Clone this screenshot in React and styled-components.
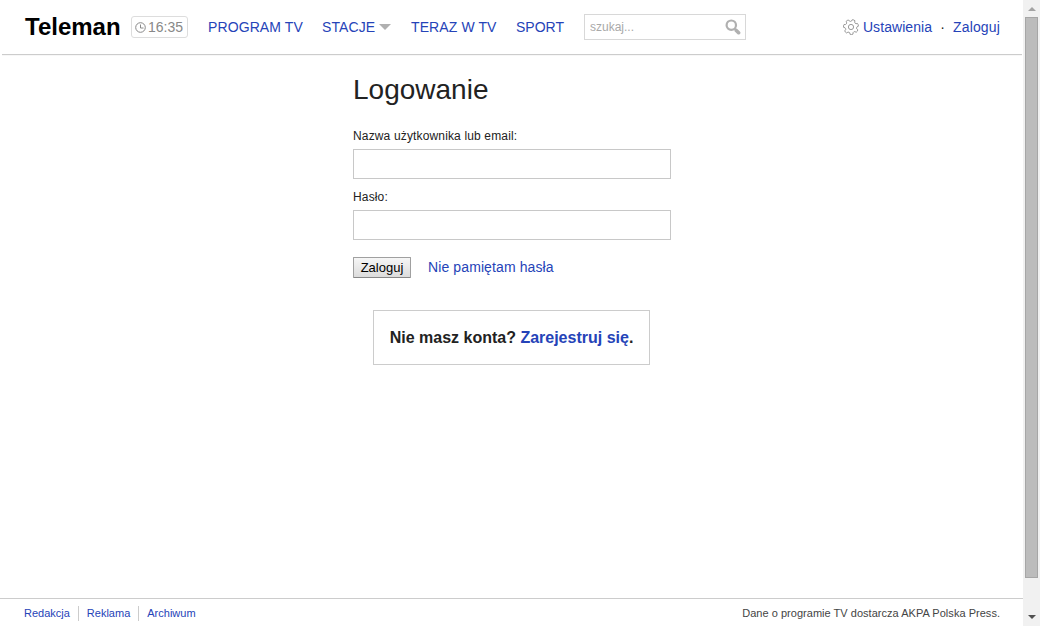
import React from "react";
import styled, { createGlobalStyle } from "styled-components";

const Global = createGlobalStyle`
  * { box-sizing: border-box; }
  html, body { margin: 0; padding: 0; overflow: hidden; }
  body {
    background: #fff;
    color: #222;
    font: 14px/18px "Liberation Sans", Arial, sans-serif;
  }
`;

const Window = styled.div`
  display: flex;
  width: 1040px;
  height: 626px;
`;
const Page = styled.div`
  display: flex;
  flex-direction: column;
  width: 1023px;
`;
const Link = styled.a`
  color: #2543b8;
  text-decoration: none;
  white-space: nowrap;
  letter-spacing: ${(p) => p.$track || "normal"};
`;

const Header = styled.header`
  display: flex;
  align-items: center;
  height: 54px;
  margin: 0 1px 0 2px;
  padding: 0 22px;
  box-shadow: 0 1px 1px rgba(0, 0, 0, 0.2);
  clip-path: inset(0 0 -4px 0);
`;
const Logo = styled.a`
  width: 107px;
  padding-left: 1px;
  color: #000;
  font-size: 24px;
  font-weight: bold;
  line-height: 28px;
`;
const Clock = styled.div`
  display: flex;
  align-items: center;
  width: 57px;
  height: 22px;
  padding-left: 3px;
  margin-right: 20px;
  border: 1px solid #ddd;
  border-radius: 3px;
  color: #888;
  svg { margin-right: 2px; }
`;
const Nav = styled.nav`
  display: flex;
  width: 376px;
`;
const NavItem = styled.div`
  display: flex;
  align-items: center;
  width: ${(p) => p.$w}px;
`;
const Caret = styled.i`
  margin-left: 4px;
  border: 6px solid transparent;
  border-top-color: #b0b0b0;
  border-bottom: 0;
`;
const Search = styled.form`
  display: flex;
  align-items: center;
  width: 162px;
  height: 26px;
  padding: 0 3px 0 5px;
  border: 1px solid #d8d8d8;
`;
const SearchInput = styled.input`
  width: 135px;
  padding: 0;
  border: 0;
  outline: 0;
  background: none;
  font: 12px/16px "Liberation Sans", Arial, sans-serif;
  &::placeholder { color: #a9a9a9; opacity: 1; }
`;
const Account = styled.div`
  display: flex;
  align-items: center;
  margin-left: auto;
  svg { margin-right: 4px; }
`;
const Dot = styled.span`
  width: 21px;
  text-align: center;
`;

const Main = styled.main`
  flex: 1;
  width: 318px;
  margin: 0 auto 0 353px;
`;
const Title = styled.h1`
  margin: 20px 0 22px;
  font-size: 28px;
  font-weight: normal;
  line-height: 32px;
`;
const Label = styled.label`
  display: block;
  height: 61px;
  font-size: 12px;
  line-height: 16px;
  letter-spacing: 0.15px;
  white-space: nowrap;
`;
const Field = styled.input`
  display: block;
  width: 318px;
  height: 30px;
  margin-top: 5px;
  padding: 0 6px;
  border: 1px solid #c8c8c8;
  border-radius: 0;
  background: #fff;
`;
const Actions = styled.div`
  display: flex;
  align-items: center;
  height: 22px;
  margin-top: 6px;
`;
const Submit = styled.button`
  width: 58px;
  height: 21px;
  margin-right: 17px;
  padding: 0;
  border: 1px solid #a0a0a0;
  border-bottom-color: #888;
  border-radius: 1px;
  background: linear-gradient(#f6f6f6, #dcdcdc);
  color: #000;
  font: 13px/17px "Liberation Sans", Arial, sans-serif;
`;
const Register = styled.div`
  width: 277px;
  height: 55px;
  margin: 32px 0 0 20px;
  border: 1px solid #ccc;
  font-size: 16px;
  font-weight: bold;
  line-height: 53px;
  text-align: center;
  white-space: nowrap;
`;

const Footer = styled.footer`
  display: flex;
  align-items: flex-start;
  height: 28px;
  padding: 7px 23px 0 24px;
  border-top: 1px solid #ccc;
  color: #444;
  font-size: 11px;
  line-height: 15px;
`;
const FooterItem = styled.div`
  margin-right: 8px;
  padding-right: 8px;
  border-right: ${(p) => (p.$last ? "0" : "1px solid #ccc")};
`;
const Credit = styled.div`
  margin-left: auto;
  white-space: nowrap;
  letter-spacing: 0.03px;
`;

const ScrollBar = styled.div`
  display: flex;
  flex-direction: column;
  align-items: center;
  width: 17px;
  background: #f1f1f1;
`;
const ScrollThumb = styled.div`
  width: 13px;
  height: 561px;
  margin: 6px 0 37px;
  border: 1px solid #a6a6a6;
  background: #bcbcbc;
`;
const Arrow = styled.i`
  margin-top: ${(p) => (p.$up ? "7px" : "0")};
  border: solid transparent;
  border-width: ${(p) => (p.$up ? "0 4px 4px" : "4px 4px 0")};
  border-bottom-color: #a3a3a3;
  border-top-color: #505050;
`;

const ClockIcon = () => (
  <svg width="11" height="11" viewBox="0 0 11 11" fill="none" stroke="#888">
    <circle cx="5.5" cy="5.5" r="4.8" />
    <path d="M5.5 2.5v3.5h3" />
  </svg>
);
const SearchIcon = () => (
  <svg width="16" height="16" viewBox="0 0 16 16" fill="none" stroke="#b0b0b0">
    <circle cx="6.3" cy="6.2" r="4.7" strokeWidth="2.2" />
    <path d="M9.8 9.8l1.2 1.2" strokeWidth="2" />
    <path d="M11.3 11.4l2.3 2.3" strokeWidth="3.6" strokeLinecap="round" />
  </svg>
);

const gearPath = (() => {
  const teeth = 7;
  const step = (Math.PI * 2) / teeth;
  const at = (r, a) => `${(8 + r * Math.cos(a)).toFixed(2)} ${(8 + r * Math.sin(a)).toFixed(2)}`;
  let d = "";
  for (let i = 0; i < teeth; i++) {
    const a = i * step - 1.2;
    d += `${i ? "L" : "M"}${at(6, a - step * 0.31)}`;
    d += `L${at(7.4, a - step * 0.22)}Q${at(7.9, a)} ${at(7.4, a + step * 0.22)}`;
    d += `L${at(6, a + step * 0.31)}`;
    d += `Q${at(5.3, a + step * 0.5)} ${at(6, a + step * 0.69)}`;
  }
  return d + "Z";
})();
const GearIcon = () => (
  <svg width="16" height="16" viewBox="0 0 16 16" fill="none" stroke="#999" strokeLinejoin="round">
    <path d={gearPath} />
    <circle cx="8" cy="8" r="2.6" />
  </svg>
);

export default function App() {
  return (
    <Window>
      <Global />
      <Page>
        <Header>
          <Logo>Teleman</Logo>
          <Clock><ClockIcon />16:35</Clock>
          <Nav>
            <NavItem $w={114}><Link $track="0.1px">PROGRAM TV</Link></NavItem>
            <NavItem $w={89}><Link $track="0.1px">STACJE</Link><Caret /></NavItem>
            <NavItem $w={105}><Link $track="0.1px">TERAZ W TV</Link></NavItem>
            <NavItem $w={68}><Link>SPORT</Link></NavItem>
          </Nav>
          <Search>
            <SearchInput placeholder="szukaj..." />
            <SearchIcon />
          </Search>
          <Account>
            <GearIcon />
            <Link $track="0.06px">Ustawienia</Link>
            <Dot>·</Dot>
            <Link $track="0.15px">Zaloguj</Link>
          </Account>
        </Header>
        <Main>
          <Title>Logowanie</Title>
          <Label>Nazwa użytkownika lub email:<Field type="text" /></Label>
          <Label>Hasło:<Field type="password" /></Label>
          <Actions>
            <Submit>Zaloguj</Submit>
            <Link $track="0.11px">Nie pamiętam hasła</Link>
          </Actions>
          <Register>Nie masz konta? <Link>Zarejestruj się</Link>.</Register>
        </Main>
        <Footer>
          <FooterItem><Link>Redakcja</Link></FooterItem>
          <FooterItem><Link>Reklama</Link></FooterItem>
          <FooterItem $last><Link>Archiwum</Link></FooterItem>
          <Credit>Dane o programie TV dostarcza AKPA Polska Press.</Credit>
        </Footer>
      </Page>
      <ScrollBar>
        <Arrow $up />
        <ScrollThumb />
        <Arrow />
      </ScrollBar>
    </Window>
  );
}
